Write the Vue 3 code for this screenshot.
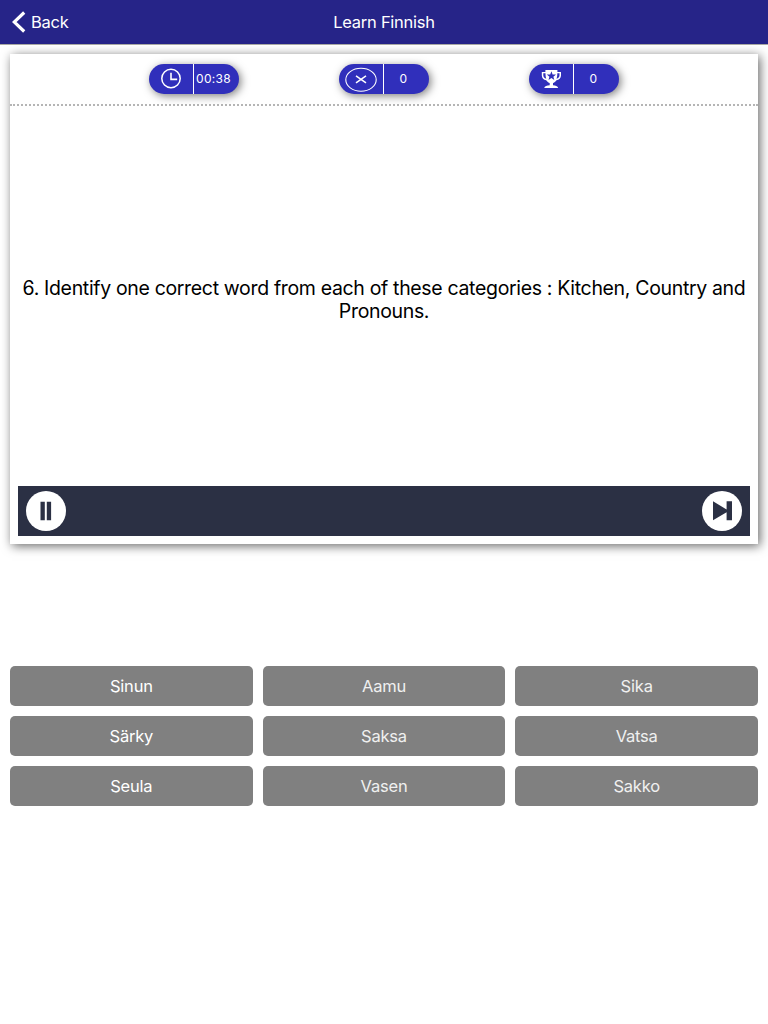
<script setup>
const words = ['Sinun', 'Aamu', 'Sika', 'Särky', 'Saksa', 'Vatsa', 'Seula', 'Vasen', 'Sakko']
const stats = [
  { icon: 'clock', value: '00:38' },
  { icon: 'cross', value: '0' },
  { icon: 'trophy', value: '0' },
]
</script>

<template>
  <div class="app">
    <header class="bar">
      <div class="back">
        <svg width="14" height="22" viewBox="0 0 14 22"><path d="M12.2 1.5 2.2 11l10 9.5" fill="none" stroke="#fff" stroke-width="3.2" /></svg>
        <span>Back</span>
      </div>
      <h1>Learn Finnish</h1>
      <div></div>
    </header>

    <main class="card">
      <div class="stats">
        <div v-for="s in stats" :key="s.icon" class="pill">
          <div class="icon">
            <svg v-if="s.icon === 'clock'" width="44" height="30" viewBox="0 0 44 30" fill="none" stroke="#fff">
              <circle cx="22" cy="14.5" r="9.2" stroke-width="1.5" />
              <path d="M22 8.7v6.7h6.2" stroke-width="1.6" />
            </svg>
            <svg v-else-if="s.icon === 'cross'" width="44" height="30" viewBox="0 0 44 30" fill="none" stroke="#fff">
              <ellipse cx="22" cy="15.8" rx="15.2" ry="11.5" stroke-width="1.1" />
              <path d="m17 11.8 10 7M27 11.8l-10 7" stroke-width="1.5" />
            </svg>
            <svg v-else width="44" height="30" viewBox="0 0 44 30">
              <path d="M16.4 6h12v2H32v3.5c0 2.6-2 4.5-4.5 4.8-1 1.5-2.3 2.4-3.5 2.8v2.2c2.5.2 4.7 1 5.200 2.700H15.200c.5-1.700 2.700-2.500 5.500-2.700v-2.200c-1.200-.4-2.500-1.300-3.500-2.800-2.500-.3-4.400-2.200-4.400-4.800V8h3.600z" fill="#fff" />
              <path d="M14.300 9.300h2.200c0 2.200.2 3.900.8 5.400-1.800-.5-3-1.700-3-3.400zM30.500 9.300h-2.200c0 2.200-.2 3.900-.8 5.400 1.800-.5 3-1.700 3-3.400z" fill="#302fbb" />
              <path d="m22.400 7.200 1.200 3.200 3.400.1-2.600 2.200.9 3.300-2.900-1.900-2.900 1.900.9-3.300-2.600-2.200 3.400-.1z" fill="#302fbb" />
            </svg>
          </div>
          <div class="value">{{ s.value }}</div>
        </div>
      </div>

      <div class="question">
        <p>6. Identify one correct word from each of these categories : Kitchen, Country and<br />Pronouns.</p>
      </div>

      <div class="controls">
        <button class="round" aria-label="Pause">
          <svg width="40" height="40" viewBox="0 0 40 40" fill="#2b3044"><path d="M14.500 10.700h4.300v18.600h-4.300zM20.800 10.700h4.300v18.600h-4.300z" /></svg>
        </button>
        <button class="round" aria-label="Next">
          <svg width="40" height="40" viewBox="0 0 40 40" fill="#2b3044"><path d="M11 10.300 24.600 18.500V10.300H30v18.900h-5.400v-8L11 29.200z" /></svg>
        </button>
      </div>
    </main>

    <div class="words">
      <button v-for="w in words" :key="w">{{ w }}</button>
    </div>
  </div>
</template>

<style>
body { margin: 0; background: #fff; }
</style>

<style scoped>
.app { height: 1024px; overflow: hidden; font-family: Inter, "Liberation Sans", sans-serif; }
.bar {
  height: 44px; background: #262488 padding-box; color: #fff;
  border-bottom: 1px solid #a9a9a4;
  display: grid; grid-template-columns: 1fr auto 1fr; align-items: center;
  font-size: 16.500px; letter-spacing: -0.27px;
}
.back { display: flex; align-items: center; gap: 5px; padding-left: 12px; }
.back svg { display: block; }
h1 { margin: 0; font-size: inherit; font-weight: 400; }
.card {
  box-sizing: border-box; margin: 9px 10px 0; height: 490px; padding: 0 0 8px;
  display: flex; flex-direction: column; background: #fff;
  box-shadow: 2px 2px 10px rgba(0, 0, 0, 0.6);
}
.stats {
  box-sizing: border-box; height: 52px; padding: 10px 89px 0;
  display: flex; justify-content: space-around; align-items: flex-start;
  border-bottom: 2px dotted #b5b5b5;
}
.pill {
  width: 90px; height: 30px; border-radius: 15px; display: flex;
  background: #302fbb; color: #fff; box-shadow: 2px 2px 8px rgba(0, 0, 0, 0.5);
}
.icon { width: 44px; border-right: 1px solid #fff; }
.icon svg { display: block; }
.value { width: 39px; text-align: center; font-size: 12px; line-height: 30px; letter-spacing: 0.3px; }
.question { flex: 1; display: flex; align-items: center; justify-content: center; padding-top: 8px; }
p { margin: 0; text-align: center; font-size: 19.500px; line-height: 23px; letter-spacing: -0.335px; white-space: nowrap; color: #000; }
.controls {
  height: 50px; margin: 0 8px; padding: 0 8px; background: #2b3044;
  display: flex; align-items: center; justify-content: space-between;
}
.round { width: 40px; height: 40px; padding: 0; border: 0; border-radius: 50%; background: #fff; }
.round svg { display: block; }
.words {
  margin: 122px 10px 0; display: grid; grid-template-columns: repeat(3, 1fr); gap: 10px;
}
.words button {
  height: 40px; padding: 0; border: 0; border-radius: 5px; background: #808080; color: #f0f0f0;
  font-family: inherit; font-size: 16.500px; letter-spacing: -0.2px;
}
.words button:nth-child(3n + 1) { color: #fff; }
</style>
